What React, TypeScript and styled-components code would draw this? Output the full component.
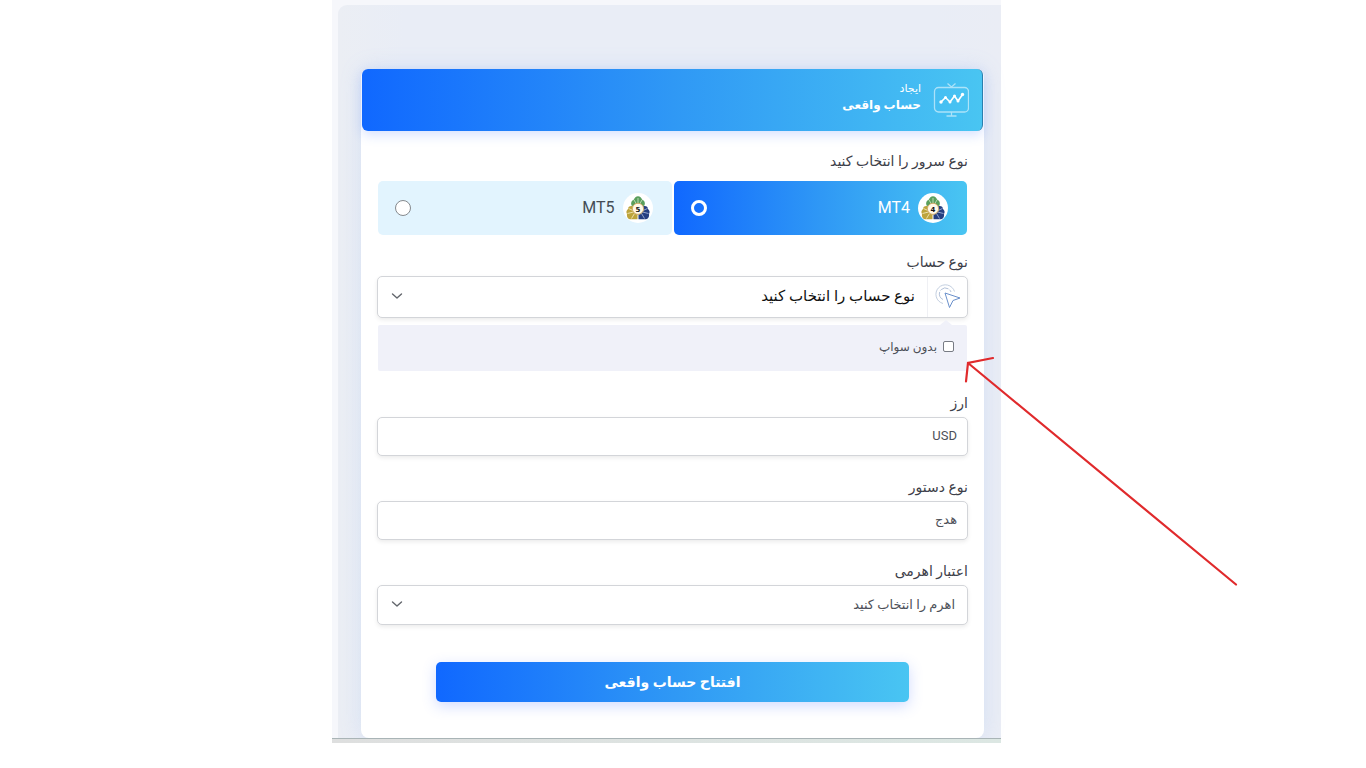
import React, { useState } from 'react';
import styled, { createGlobalStyle } from 'styled-components';

const GlobalStyle = createGlobalStyle`
  * { box-sizing: border-box; }
  body { margin: 0; background: #fff; overflow-x: hidden; }
  body, input, select, button { font-family: Roboto, "DejaVu Sans", sans-serif; }
`;

const blueGradient = 'linear-gradient(90deg, #1068ff, #2f98f5 50%, #49c5f2)';

const Page = styled.main`
  display: grid;
  grid-template-columns: 332fr 669fr 365fr;
`;

const Panel = styled.div`
  grid-column: 2;
  position: relative;
  direction: rtl;
  background: #f6f7fb;
`;

const Backdrop = styled.div`
  margin-left: 6px;
  padding: 64px 17px 0 23px;
  background: linear-gradient(90deg, #ebeef4, #e9edf6 10%, #e9edf6 90%, #eaedf5);
  border-top-left-radius: 9px;
`;

const TopSpace = styled.div`
  padding-top: 5px;
`;

const Card = styled.form`
  background: #fff;
  border-radius: 8px;
  box-shadow: 0 0 22px rgba(120, 165, 245, 0.18);
`;

const Header = styled.header`
  display: flex;
  align-items: center;
  gap: 12px;
  height: 62px;
  margin: 0 1px;
  padding-right: 13px;
  color: #fff;
  background: ${blueGradient};
  border-right: 1px solid #2b7fae;
  border-radius: 6px;
  box-shadow: 0 4px 12px rgba(70, 120, 255, 0.22);
`;

const HeaderText = styled.div`
  display: flex;
  flex-direction: column;
  padding-bottom: 6px;
`;

const Eyebrow = styled.span`
  font-size: 11px;
  line-height: 16px;
`;

const Title = styled.h1`
  margin: 0;
  font-size: 12px;
  line-height: 16px;
  font-weight: 700;
`;

const Body = styled.div`
  display: flex;
  flex-direction: column;
  padding: 16px 16px 36px;
`;

const Field = styled.div<{ $gap?: number }>`
  display: flex;
  flex-direction: column;
  margin-bottom: ${(p) => p.$gap ?? 17}px;
`;

const Label = styled.label`
  font-size: 14px;
  line-height: 28px;
  color: #3d4049;
`;

const Servers = styled.fieldset`
  margin: 0 0 13px;
  padding: 0;
  border: 0;
  min-width: 0;
`;

const Legend = styled.legend`
  padding: 0;
  margin-bottom: 6px;
  font-size: 14px;
  line-height: 28px;
  color: #3d4049;
`;

const ServerRow = styled.div`
  display: grid;
  grid-template-columns: 1fr 1fr;
  gap: 2px;
  margin: 0 1px;
`;

const Server = styled.label<{ $active: boolean }>`
  display: flex;
  align-items: center;
  gap: 8px;
  height: 54px;
  padding: 0 19px 0 17px;
  border-radius: 5px;
  font-size: 16px;
  color: ${(p) => (p.$active ? '#fff' : '#444c55')};
  background: ${(p) => (p.$active ? blueGradient : '#e2f4fe')};
`;

const ServerName = styled.span`
  padding-bottom: 2px;
`;

const Radio = styled.input`
  appearance: none;
  width: 16px;
  height: 16px;
  margin: 0 auto 0 0;
  border: 1px solid #85898d;
  border-radius: 50%;
  background: #fff;
  &:checked {
    border: 3px solid #fff;
    background: transparent;
  }
`;

const Control = styled.div<{ $height: number }>`
  display: flex;
  position: relative;
  height: ${(p) => p.$height}px;
  border: 1px solid #d3d5d9;
  border-radius: 5px;
  background: #fff;
  box-shadow: 0 2px 4px rgba(0, 0, 0, 0.08);
`;

const IconCell = styled.span`
  display: flex;
  align-items: center;
  justify-content: center;
  width: 40px;
  border-left: 1px solid #eff0f4;
`;

const Select = styled.select<{ $large?: boolean }>`
  appearance: none;
  flex: 1;
  min-width: 0;
  padding: 0 12px 2px 36px;
  border: 0;
  border-radius: 5px;
  background: transparent;
  font-size: ${(p) => (p.$large ? 15 : 13)}px;
  color: ${(p) => (p.$large ? '#111' : '#4d5058')};
`;

const TextInput = styled.input`
  flex: 1;
  min-width: 0;
  padding: 0 10px 2px;
  border: 0;
  border-radius: 5px;
  background: transparent;
  text-align: right;
  font-size: 13px;
  color: #4d5058;
`;

const Chevron = styled.svg`
  position: absolute;
  left: 13px;
  top: 50%;
  margin-top: -7px;
  pointer-events: none;
`;

const SwapBox = styled.label`
  position: relative;
  display: flex;
  align-items: center;
  gap: 6px;
  height: 46px;
  margin: 0 1px 18px;
  padding: 0 13px 3px;
  font-size: 12px;
  color: #4d5058;
  background: #f0f1f9;
  border-radius: 2px;
  &::before {
    content: '';
    position: absolute;
    right: 15px;
    bottom: 100%;
    border: 6px solid transparent;
    border-top: 0;
    border-bottom: 5px solid #f0f1f9;
  }
`;

const Checkbox = styled.input`
  appearance: none;
  width: 11px;
  height: 11px;
  margin: 0;
  border: 1px solid #777b84;
  border-radius: 2px;
  background: #fff;
  &:checked { background: #1068ff; }
`;

const Submit = styled.button`
  align-self: center;
  width: 80%;
  height: 40px;
  margin-top: 20px;
  border: 0;
  border-radius: 5px;
  color: #fff;
  background: ${blueGradient};
  box-shadow: 0 4px 14px rgba(70, 110, 255, 0.25);
  font-size: 14px;
  font-weight: 700;
`;

const BottomStrip = styled.div`
  height: 5px;
  border-top: 1px solid #a9b4b6;
  background: linear-gradient(90deg, #dedfdf, #dce7e3);
`;

const Arrow = styled.svg`
  position: absolute;
  left: calc(100% - 41px);
  top: 350px;
  pointer-events: none;
`;

function MonitorIcon() {
  return (
    <svg width="36" height="36" viewBox="0 0 36 36" fill="none" stroke="#fff" aria-hidden="true">
      <g opacity=".55">
        <rect x="1.500" y="5.500" width="34" height="24.500" rx="4" strokeWidth="1.300" />
        <path d="M14.500 1.500l4 3.500 4-3.500M18.500 30v4M13.500 34h10" strokeWidth="1.300" />
      </g>
      <path d="M8 20l4.500-4.500 4.500 4.500 4.500-6 3.500 5 4.500-6.500" strokeWidth="1.600" strokeLinejoin="round" />
      <g fill="#fff" stroke="none">
        <circle cx="8" cy="20" r="1.700" /><circle cx="12.500" cy="15.500" r="1.500" />
        <circle cx="17" cy="20" r="1.500" /><circle cx="21.500" cy="14" r="1.500" />
        <circle cx="25" cy="19" r="1.500" /><circle cx="29.500" cy="12.500" r="1.700" />
      </g>
    </svg>
  );
}

function ServerLogo({ digit }: { digit: string }) {
  return (
    <svg width="30" height="30" viewBox="0 0 30 30" aria-hidden="true">
      <circle cx="15" cy="15" r="15" fill="#fff" />
      <path d="M8.500 12.500C7.500 9.500 8.500 7.500 11 6.500 11.500 4.500 13 3.500 15 3.200 17 3.500 18.500 4.500 19 6.500 21.500 7.500 22.500 9.500 21.500 12.500L15 15z" fill="#5a9f5c" />
      <path d="M11 7l2.500 4M19 7l-2.500 4M15 5v5" stroke="#c3dfbb" strokeWidth=".9" />
      <path d="M9.500 13C7 12.500 5 13.500 5 16 3.200 17.500 3 19.500 4 21 3.500 24 5 26.300 8 26.300H14.500V16z" fill="#bda43c" />
      <path d="M4.500 20.500l6-1.500M8.500 25.500l3-5M5.500 15.500l4.500 2" stroke="#f2e6b5" strokeWidth=".9" />
      <path d="M20.500 13C23 12.500 25 13.500 25 16 26.800 17.500 27 19.500 26 21 26.500 24 25 26.300 22 26.300H15.500V16z" fill="#253f80" />
      <path d="M25.500 20.500l-6-1.500M21.500 25.500l-3-5M24.500 15.500l-4.500 2" stroke="#9fb0d6" strokeWidth=".9" />
      <circle cx="15" cy="15.800" r="5.600" fill="#fff8e8" stroke="#cfab69" />
      <text x="15" y="18.500" textAnchor="middle" fontFamily="DejaVu Sans, sans-serif" fontWeight="700" fontSize="7" fill="#111">{digit}</text>
    </svg>
  );
}

function PointerIcon() {
  return (
    <svg width="26" height="26" viewBox="0 0 26 26" fill="none" aria-hidden="true">
      <path d="M8 19.500A9.500 9.500 0 1 1 19.500 7.500" stroke="#c3cfe0" />
      <path d="M8 15.500A6 6 0 1 1 16 8" stroke="#b3c2d9" strokeDasharray="9 1.500" />
      <path d="M10 9l15 5-7 2.500-3.500 7z" stroke="#6a90cb" strokeLinejoin="round" />
    </svg>
  );
}

function ChevronIcon() {
  return (
    <Chevron width="12" height="12" viewBox="0 0 12 12" fill="none" stroke="#62666c" strokeWidth="1.4" aria-hidden="true">
      <path d="M1.500 4L6 8l4.500-4" strokeLinecap="round" strokeLinejoin="round" />
    </Chevron>
  );
}

export default function App() {
  const [server, setServer] = useState('MT4');

  return (
    <>
      <GlobalStyle />
      <Page lang="fa">
        <Panel>
          <TopSpace>
            <Backdrop>
              <Card onSubmit={(e) => e.preventDefault()}>
                <Header>
                  <MonitorIcon />
                  <HeaderText>
                    <Eyebrow>ایجاد</Eyebrow>
                    <Title>حساب واقعی</Title>
                  </HeaderText>
                </Header>
                <Body>
                  <Servers>
                    <Legend>نوع سرور را انتخاب کنید</Legend>
                    <ServerRow>
                      {['MT4', 'MT5'].map((name) => (
                        <Server key={name} $active={server === name}>
                          <ServerLogo digit={name[2]} />
                          <ServerName>{name}</ServerName>
                          <Radio type="radio" name="server" checked={server === name} onChange={() => setServer(name)} />
                        </Server>
                      ))}
                    </ServerRow>
                  </Servers>
                  <Field $gap={7}>
                    <Label htmlFor="account">نوع حساب</Label>
                    <Control $height={42}>
                      <IconCell><PointerIcon /></IconCell>
                      <Select id="account" $large>
                        <option>نوع حساب را انتخاب کنید</option>
                      </Select>
                      <ChevronIcon />
                    </Control>
                  </Field>
                  <SwapBox>
                    <Checkbox type="checkbox" />
                    بدون سواپ
                  </SwapBox>
                  <Field>
                    <Label htmlFor="currency">ارز</Label>
                    <Control $height={39}>
                      <TextInput id="currency" readOnly value="USD" />
                    </Control>
                  </Field>
                  <Field>
                    <Label htmlFor="order">نوع دستور</Label>
                    <Control $height={39}>
                      <TextInput id="order" readOnly value="هدج" />
                    </Control>
                  </Field>
                  <Field>
                    <Label htmlFor="leverage">اعتبار اهرمی</Label>
                    <Control $height={40}>
                      <Select id="leverage">
                        <option>اهرم را انتخاب کنید</option>
                      </Select>
                      <ChevronIcon />
                    </Control>
                  </Field>
                  <Submit type="submit">افتتاح حساب واقعی</Submit>
                </Body>
              </Card>
            </Backdrop>
          </TopSpace>
          <BottomStrip />
          <Arrow width="280" height="240" viewBox="0 0 280 240" fill="none" stroke="#e02a2c" strokeWidth="2.200" strokeLinecap="round" aria-hidden="true">
            <path d="M276 234.500L8 13M33 8L8 13L6 31.500" />
          </Arrow>
        </Panel>
      </Page>
    </>
  );
}
